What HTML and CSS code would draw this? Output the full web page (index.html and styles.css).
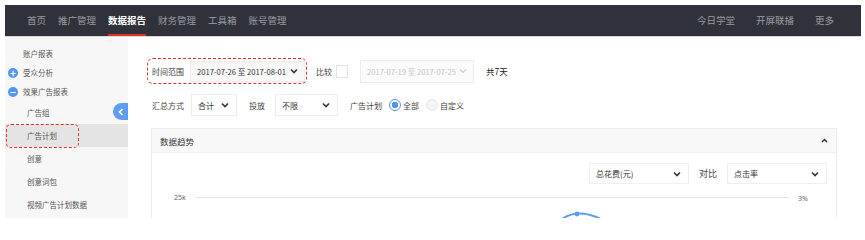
FILE: index.html
```html
<!DOCTYPE html>
<html lang="zh-CN">
<head>
  <meta charset="UTF-8">
  <title>数据报告</title>
  <link rel="stylesheet" href="styles.css">
</head>
<body>
  <div class="page">
    <header class="topbar">
      <nav class="nav">
        <a>首页</a>
        <a>推广管理</a>
        <a class="active">数据报告</a>
        <a>财务管理</a>
        <a>工具箱</a>
        <a>账号管理</a>
      </nav>
      <nav class="nav nav-right">
        <a>今日学堂</a>
        <a>开屏联播</a>
        <a>更多</a>
      </nav>
    </header>
    <div class="layout">
      <aside class="sidebar">
        <div class="side-item">账户报表</div>
        <div class="side-item"><span class="dot-icon">+</span>受众分析</div>
        <div class="side-item"><span class="dot-icon">&minus;</span>效果广告报表</div>
        <div class="side-item sub">广告组</div>
        <div class="side-item sub current"><span class="mark"></span>广告计划</div>
        <div class="side-item sub">创意</div>
        <div class="side-item sub">创意词包</div>
        <div class="side-item sub">视频广告计划数据</div>
        <span class="collapse">
          <svg width="6" height="8" viewBox="0 0 6 8"><polyline points="4.5,1 1.5,4 4.5,7" fill="none" stroke="#fff" stroke-width="1.6"/></svg>
        </span>
      </aside>
      <main class="main">
        <div class="row">
          <div class="range-box">
            <span class="label">时间范围</span>
            <div class="select date">
              <span>2017-07-26 至 2017-08-01</span>
              <svg class="chev" width="8" height="6" viewBox="0 0 8 6"><polyline points="1,1.5 4,4.5 7,1.5" fill="none" stroke="#333" stroke-width="1.6"/></svg>
            </div>
          </div>
          <span class="label compare">比较</span>
          <span class="checkbox"></span>
          <div class="select date disabled">
            <span>2017-07-19 至 2017-07-25</span>
            <svg class="chev" width="8" height="6" viewBox="0 0 8 6"><polyline points="1,1.5 4,4.5 7,1.5" fill="none" stroke="#ccc" stroke-width="1.2"/></svg>
          </div>
          <span class="label days">共7天</span>
        </div>
        <div class="row row-two">
          <span class="label">汇总方式</span>
          <div class="select sum">
            <span>合计</span>
            <svg class="chev" width="8" height="6" viewBox="0 0 8 6"><polyline points="1,1.5 4,4.5 7,1.5" fill="none" stroke="#333" stroke-width="1.6"/></svg>
          </div>
          <span class="label gap">投放</span>
          <div class="select limit">
            <span>不限</span>
            <svg class="chev" width="8" height="6" viewBox="0 0 8 6"><polyline points="1,1.5 4,4.5 7,1.5" fill="none" stroke="#333" stroke-width="1.6"/></svg>
          </div>
          <span class="label gap">广告计划</span>
          <span class="radio on"></span><span class="label">全部</span>
          <span class="radio"></span><span class="label">自定义</span>
        </div>
        <section class="panel">
          <div class="panel-head">
            <span>数据趋势</span>
            <svg width="7" height="5" viewBox="0 0 7 5"><polyline points="1,4 3.5,1.5 6,4" fill="none" stroke="#333" stroke-width="1.5"/></svg>
          </div>
          <div class="panel-body">
            <div class="metrics">
              <div class="select metric">
                <span>总花费(元)</span>
                <svg class="chev" width="8" height="6" viewBox="0 0 8 6"><polyline points="1,1.5 4,4.5 7,1.5" fill="none" stroke="#333" stroke-width="1.6"/></svg>
              </div>
              <span class="label vs">对比</span>
              <div class="select metric">
                <span>点击率</span>
                <svg class="chev" width="8" height="6" viewBox="0 0 8 6"><polyline points="1,1.5 4,4.5 7,1.5" fill="none" stroke="#333" stroke-width="1.6"/></svg>
              </div>
            </div>
            <svg class="chart" width="684" height="34" viewBox="0 0 684 34">
              <text x="22" y="14" class="axis">25k</text>
              <line x1="44" y1="11.5" x2="637" y2="11.5" stroke="#e3e3e3" stroke-width="1"/>
              <text x="646" y="15" class="axis">3%</text>
              <path d="M409 34 Q425 21 451 34" fill="none" stroke="#5b9cf6" stroke-width="2"/>
              <circle cx="425" cy="28" r="2.4" fill="#5b9cf6"/>
            </svg>
          </div>
        </section>
      </main>
    </div>
  </div>
</body>
</html>
```

FILE: styles.css
```css
body {
  margin: 0;
  background: #fff;
  font-family: "Noto Sans CJK SC", "Noto Sans", sans-serif;
  color: #444;
}
.page {
  margin: 5px 0 0 5px;
  width: 856px;
  height: 213px;
  overflow: hidden;
  display: flex;
  flex-direction: column;
}
.topbar {
  height: 32px;
  flex: none;
  background: #2f323a;
  display: flex;
  justify-content: space-between;
  padding: 0 27px 0 22px;
  border-bottom: 1px solid #d8d8d8;
  box-sizing: border-box;
}
.nav {
  display: flex;
  gap: 12px;
}
.nav a {
  font-size: 9.5px;
  color: #9a9ca2;
  line-height: 31px;
  position: relative;
}
.nav a.active {
  color: #fff;
  font-weight: bold;
}
.nav a.active::after {
  content: "";
  position: absolute;
  left: 0;
  right: 0;
  bottom: 0;
  height: 2px;
  background: #e0302b;
}
.nav-right {
  gap: 21px;
}
.layout {
  flex: 1;
  display: flex;
}
.sidebar {
  width: 123px;
  flex: none;
  background: #f7f7f7;
  padding-top: 7px;
  position: relative;
  font-size: 7.5px;
  color: #555;
  box-sizing: border-box;
}
.side-item {
  height: 19px;
  display: flex;
  align-items: center;
  padding-left: 18px;
  position: relative;
}
.side-item.sub {
  height: 23px;
  padding-left: 22px;
}
.side-item.current {
  background: #e4e4e4;
}
.dot-icon {
  position: absolute;
  left: 3px;
  width: 10px;
  height: 10px;
  border-radius: 50%;
  background: #4f95f3;
  color: #fff;
  font-size: 10px;
  font-weight: bold;
  line-height: 10px;
  text-align: center;
}
.mark {
  position: absolute;
  left: 1px;
  top: 0;
  width: 71px;
  height: 22px;
  border: 1.5px dashed #e0302b;
  border-radius: 5px;
}
.collapse {
  position: absolute;
  right: 0;
  top: 66px;
  width: 15px;
  height: 17px;
  background: #5e9df3;
  border-radius: 9px 0 0 9px;
  display: flex;
  align-items: center;
  justify-content: center;
}
.main {
  flex: 1;
  padding: 21px 0 0 19px;
  font-size: 8px;
  box-sizing: border-box;
}
.row {
  display: flex;
  align-items: center;
}
.label {
  white-space: nowrap;
  color: #444;
}
.range-box {
  display: flex;
  align-items: center;
  gap: 6px;
  height: 26px;
  width: 160px;
  box-sizing: border-box;
  padding: 0 3px 0 4px;
  border: 1.5px dashed #e0302b;
  border-radius: 6px;
}
.select {
  display: flex;
  align-items: center;
  justify-content: space-between;
  height: 22px;
  box-sizing: border-box;
  border: 1px solid #ececec;
  background: #f8f8f8;
  padding: 0 7px 0 6px;
  color: #333;
  white-space: nowrap;
}
.select.date {
  width: 115px;
  height: 21px;
  font-size: 7.6px;
  padding: 0 6px 0 6px;
  flex: none;
}
.select.disabled {
  width: 114px;
  height: 23px;
  color: #c4c4c4;
  background: #fbfbfb;
  margin-left: 12px;
}
.compare {
  margin-left: 9px;
}
.checkbox {
  width: 12px;
  height: 13px;
  margin-left: 4px;
  border: 1px solid #e2e2e2;
  background: #fff;
  box-sizing: border-box;
}
.days {
  margin-left: 12px;
  font-size: 8.5px;
  color: #222;
}
.row-two {
  margin-top: 10px;
  padding-left: 5px;
  height: 22px;
}
.select.sum {
  width: 46px;
  margin-left: 7px;
  background: #fff;
}
.select.limit {
  width: 63px;
  margin-left: 10px;
  background: #fff;
}
.gap {
  margin-left: 12px;
}
.radio {
  width: 12px;
  height: 12px;
  border-radius: 50%;
  margin: 0 2px 0 7px;
  box-sizing: border-box;
  border: 1px solid #e6e6e6;
  background: #f4f4f4;
}
.radio.on {
  border: 1.5px solid #4f95f3;
  background: radial-gradient(circle, #4f95f3 0 3px, #fff 3.5px);
}
.panel {
  margin: 12px 0 0 4px;
  width: 686px;
  height: 90px;
  box-sizing: border-box;
  border: 1px solid #ececec;
  border-bottom: none;
}
.panel-head {
  height: 23px;
  background: #f8f8f8;
  border-bottom: 1px solid #eee;
  display: flex;
  align-items: center;
  justify-content: space-between;
  padding: 0 8px 0 8px;
  font-size: 8.5px;
  color: #333;
}
.panel-body {
  padding-top: 10px;
}
.metrics {
  display: flex;
  align-items: center;
  justify-content: flex-end;
  padding-right: 9px;
}
.select.metric {
  width: 100px;
  height: 21px;
  background: #fff;
  border-color: #eee;
}
.vs {
  margin: 0 10px;
  font-size: 9px;
}
.chart {
  display: block;
  margin-top: 2px;
}
.axis {
  font-size: 7px;
  fill: #666;
  font-family: "Noto Sans", sans-serif;
}
```
